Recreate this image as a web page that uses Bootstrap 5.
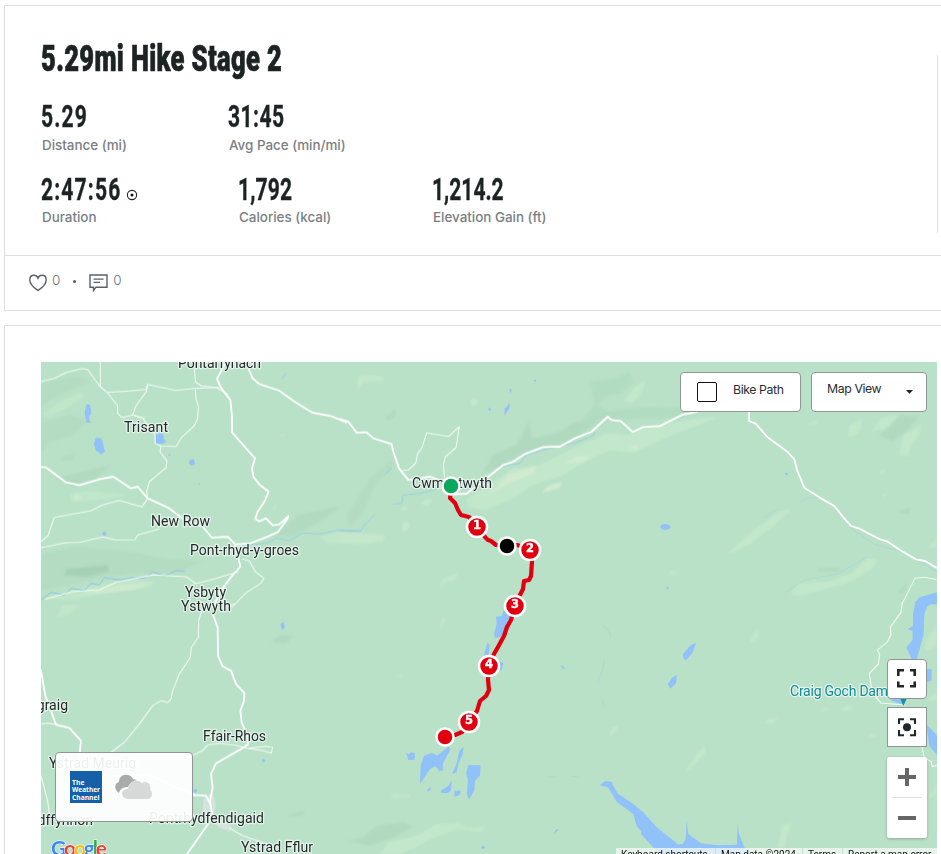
<!DOCTYPE html>
<html lang="en">
<head>
<meta charset="utf-8">
<meta name="viewport" content="width=device-width, initial-scale=1">
<title>5.29mi Hike Stage 2</title>
<link href="https://cdn.jsdelivr.net/npm/bootstrap@5.3.0/dist/css/bootstrap.min.css" rel="stylesheet">
<style>
  html, body { height: 854px; overflow: hidden; }
  body { background: #fff; color: #1d2323; font-family: Inter, "Liberation Sans", sans-serif; padding: 5px 0 0 4px; }
  .panel { border: 1px solid #dcdedf; border-right: 0; border-radius: 0; }
  .summary { height: 306px; margin-bottom: 14px; }
  .summary-main { height: 249px; padding: 36px 0 0 36px; }
  .side-rule { width: 1px; height: 178px; background: #dcdedf; margin: 13px 3px 0 0; }
  .cond { display: block; font-family: Roboto, "Liberation Sans", sans-serif; font-weight: 700; white-space: nowrap; transform-origin: 0 50%; width: max-content; }
  .page-title { font-size: 37px; line-height: 34px; font-weight: 900; transform: scaleX(.69); letter-spacing: .5px; height: 34px; margin: 0 0 24px; -webkit-text-stroke: .7px #1d2323; }
  .figure-num { font-size: 30.5px; line-height: 34px; height: 34px; transform: scaleX(.69); -webkit-text-stroke: .35px #1d2323; }
  .sp-wide { letter-spacing: 1.7px; } .sp-mid { letter-spacing: .7px; } .sp-low { letter-spacing: .2px; }
  .num-duration { margin-right: -32px; }
  .stat-cell { height: 73px; flex: none; }
  .stat-label { font-size: 13.4px; line-height: 16px; font-weight: 500; color: #7a7e84; margin: 3px 0 0 1px; white-space: nowrap; display: block; width: max-content; }
  .row-two .stat-label { margin-top: 2px; }
  .w-a { width: 187px; } .w-b { width: 197px; } .w-c { width: 194px; }
  .social { height: 55px; border-top: 1px solid #dcdedf; padding: 0 0 4px 24px; font-size: 13.5px; color: #6c7278; font-weight: 300; }
  .num-like, .num-note { position: relative; top: -1px; }
  .num-like { margin-left: 3px; } .num-note { margin-left: 5px; }
  .sep-dot { width: 3px; height: 3px; background: #555b60; margin: 0 13px; }
  .map-panel { height: 560px; padding: 36px 0 0 36px; }
  .map-box { width: 896px; height: 500px; position: relative; overflow: hidden; background: #b9e1c8; }
  .map-box > svg { display: block; }
  .ctl { position: absolute; background: #fff; border: 1px solid #8f9694; border-radius: 4px; font-size: 12.3px; color: #2a2e31; }
  .ctl-bike { left: 639px; top: 10px; width: 121px; height: 40px; padding: 0 0 4px 16px; letter-spacing: -.4px; }
  .tick { width: 20px; height: 20px; border: 1.5px solid #111; border-radius: 2px; margin: 3px 16px 0 0; }
  .ctl-view { left: 770px; top: 10px; width: 116px; height: 40px; padding: 0 13px 5px 15px; letter-spacing: -.4px; }
  .ctl-full { left: 846px; top: 297px; width: 40px; height: 40px; }
  .ctl-center { left: 846px; top: 345px; width: 40px; height: 40px; border-radius: 0; }
  .ctl-zoom { left: 846px; top: 395px; width: 40px; height: 81px; border: 0; border-radius: 2px; box-shadow: 0 1px 3px rgba(0,0,0,.25); }
  .weather { left: 14px; top: 390px; width: 138px; height: 70px; background: rgba(255,255,255,.92); padding: 0 0 0 14px; }
  .cloud { margin-left: 12px; }
  .legal { position: absolute; left: 575px; top: 486px; width: 321px; height: 14px; background: rgba(243,248,245,.78); font: 10px/14px Roboto, sans-serif; color: #111; }
  .legal span { padding-left: 5px; border-left: 1px solid #cfdcd4; white-space: nowrap; }
  .legal span:first-child { border: 0; width: 99px; }
  .legal span:nth-child(2) { width: 87px; } .legal span:nth-child(3) { width: 40px; }
</style>
</head>
<body>
<section class="panel summary">
  <div class="summary-main d-flex justify-content-between">
    <div>
      <h1 class="cond page-title">5.29mi Hike Stage 2</h1>
      <div class="d-flex">
        <div class="stat-cell w-a"><span class="cond figure-num sp-wide">5.29</span><span class="stat-label">Distance (mi)</span></div>
        <div class="stat-cell"><span class="cond figure-num sp-mid">31:45</span><span class="stat-label">Avg Pace (min/mi)</span></div>
      </div>
      <div class="d-flex row-two">
        <div class="stat-cell w-b">
          <div class="d-flex">
            <span class="cond figure-num sp-wide num-duration">2:47:56</span>
            <svg width="12" height="12" viewBox="0 0 12 12" class="mt-3"><circle cx="6" cy="6" r="4.600" fill="none" stroke="#222" stroke-width="1.100"/><circle cx="6" cy="6" r="1.500" fill="#111"/></svg>
          </div>
          <span class="stat-label">Duration</span>
        </div>
        <div class="stat-cell w-c"><span class="cond figure-num sp-low">1,792</span><span class="stat-label">Calories (kcal)</span></div>
        <div class="stat-cell"><span class="cond figure-num">1,214.2</span><span class="stat-label">Elevation Gain (ft)</span></div>
      </div>
    </div>
    <div class="side-rule"></div>
  </div>
  <div class="social d-flex align-items-center">
    <svg width="20" height="18" viewBox="0 0 20 18" class="mt-1"><path d="M9 16.500C6.500 14.700.8 11 .8 5.900C.8 2.600 3 1.300 5 1.300C7 1.300 8.300 2.500 9 4.200C9.700 2.500 11 1.300 13 1.300C15.300 1.300 17.200 2.800 17.200 5.900C17.200 11 11.500 14.700 9 16.500Z" fill="none" stroke="#5b6166" stroke-width="1.400"/></svg>
    <span class="num-like">0</span>
    <span class="rounded-circle sep-dot"></span>
    <svg width="19" height="18" viewBox="0 0 19 18" class="mt-1"><path d="M1 1H18V13.200H7L4.500 16.500V13.200H1Z" fill="none" stroke="#5b6166" stroke-width="1.400"/><path d="M4.500 5.200H14.500M4.500 8.400H11" stroke="#5b6166" stroke-width="1.200"/></svg>
    <span class="num-note">0</span>
  </div>
</section>

<section class="panel map-panel">
  <div class="map-box">
    <svg width="896" height="500" viewBox="41 362 896 500">
      <defs><filter id="soft"><feGaussianBlur stdDeviation="2.500"/></filter></defs>
      <rect x="41" y="362" width="896" height="500" fill="#b9e1c8"/>
      <!-- relief, north-west -->
      <g transform="translate(36 355) scale(.33333)" filter="url(#soft)">
        <g fill="#b1dac0">
          <path d="M15 85L120 62L160 78L80 115L15 150Z" opacity=".7"/><path d="M15 205L100 180L160 195L110 240L40 262L15 290Z" opacity=".7"/>
          <path d="M60 370L180 340L230 330L180 370L110 392Z"/><path d="M15 600L120 575L280 590L380 610L500 620L430 650L300 655L200 665L100 690L15 705Z" opacity=".75"/>
          <path d="M90 642L215 630L220 650L150 665L85 660Z" fill="#a6d0b6"/><path d="M715 540L790 480L900 455L905 465L840 505L770 545Z"/>
          <path d="M80 305L118 298L110 314L70 316Z"/>
        </g>
        <g fill="#c0e6ca">
          <path d="M20 175L90 130L140 110L145 125L100 155L30 190Z"/><path d="M100 415L150 408L270 418L260 425L170 438L105 440Z"/>
          <path d="M15 735L110 705L210 685L300 672L360 680L330 700L200 715L110 735Z"/><path d="M130 715L250 690L350 682L300 703L170 718Z" fill="#cdeacf"/><circle cx="124" cy="428" r="10" fill="#cdeacf"/>
          <path d="M850 545L900 530L930 535V560L880 568Z"/><path d="M705 465L722 445L716 470Z"/><path d="M720 242L740 236L755 246Z"/><path d="M65 788L90 755L140 748L95 780Z"/>
        </g>
      </g>
      <!-- relief, north -->
      <g transform="translate(340 355) scale(.33333)" filter="url(#soft)">
        <g fill="#b0d9bf">
          <path d="M430 350L460 300L530 270L570 195L575 250L650 235L700 205L760 195L720 240L660 268L600 275L520 310L450 350Z"/>
          <path d="M750 80L830 70L870 50L880 80L845 115L800 120L775 150L800 170L920 155L1045 160V185L920 190L840 195L800 185L740 225L640 265L720 200L765 150Z" opacity=".75"/>
          <path d="M90 370L160 310L155 345L110 380L70 470L30 520L20 480Z" opacity=".6"/><path d="M135 190L165 162L168 180L150 197Z"/>
        </g>
        <g fill="#c2e7cb">
          <path d="M380 430L450 390L520 340L600 330L720 270L800 235L860 240L930 215L1100 185L1130 190L1010 235L910 280L880 295L810 285L720 330L660 365L580 390L520 430L440 465L385 460Z"/>
          <path d="M470 400L500 360L590 332L580 355L510 385L440 420Z" fill="#d0ebd0"/><path d="M605 415L625 393L665 380L660 398Z" fill="#d0ebd0"/><path d="M675 325L705 305L750 302L735 320Z" fill="#d0ebd0"/><path d="M865 280L892 270L895 288Z" fill="#d0ebd0"/>
          <path d="M850 140L885 95L915 75L910 105L880 145Z"/><path d="M50 115L55 65L100 60L137 70L125 78L70 80Z"/><path d="M0 530L60 535L135 540L130 560L60 568L0 565Z"/>
          <path d="M300 705L305 672L355 655L345 675L315 680Z"/><path d="M185 530L190 498L208 505L204 525Z"/><circle cx="402" cy="140" r="11"/><path d="M240 445L265 430L280 440L260 454Z"/><path d="M180 465L190 452L205 458L195 468Z"/>
        </g>
      </g>
      <!-- relief, north-east -->
      <g transform="translate(641 355) scale(.33333)" filter="url(#soft)">
        <path d="M715 240L780 180L835 185L790 235L750 260Z" fill="#b0d9bf"/><path d="M768 468L810 458L805 475L780 475ZM530 640L600 638L590 650L535 650ZM770 710L800 683L785 715Z" fill="#b0d9bf"/>
        <g fill="#c2e7cb"><path d="M620 245L625 215L660 190L660 225L640 245Z"/><path d="M690 230L720 190L770 180L740 220Z"/><path d="M775 300L785 240L840 210L835 240L810 275L800 305Z"/><path d="M495 213L525 194L530 205Z"/><path d="M260 595L320 540L400 480L440 460L447 468L400 510L330 565L285 590Z"/><path d="M450 720L470 685L560 680L630 655L680 610L710 612L695 640L630 680L560 700L490 720Z"/><path d="M80 660L95 645L120 652Z"/><path d="M860 580L890 545V575Z"/><path d="M710 360L725 343L732 350ZM718 424L738 412L735 424Z"/></g>
      </g>
      <!-- relief, south -->
      <g transform="translate(340 604) scale(.33333)" filter="url(#soft)">
        <path d="M20 712L70 700L110 665L190 655L220 668L160 700L90 725Z" fill="#b0d9bf"/>
        <g fill="#c2e7cb"><path d="M120 750L145 715L230 695L290 660L355 658L380 670L440 668L420 685L350 675L270 705L220 735L180 750Z"/><path d="M150 570L215 572L210 580L160 582Z"/><path d="M300 75L305 38L314 45L305 76Z"/><path d="M803 400L820 370L838 365L820 390Z"/><path d="M170 220L185 210L192 218Z"/></g>
      </g>
      <g transform="translate(641 604) scale(.33333)" filter="url(#soft)">
        <g fill="#c2e7cb"><path d="M325 115L350 70L353 95L340 115Z"/><path d="M370 360L385 343L412 342L395 358Z"/><path d="M533 325L550 310L565 318ZM597 316L620 302L640 310L620 322Z"/><path d="M128 508L160 460L190 425L194 445L165 480Z"/><path d="M410 730L425 665L453 655L440 690L430 735Z"/><path d="M850 135L865 95L889 60V125L860 140Z"/><path d="M855 290L889 265V290ZM860 585L889 540V570Z"/><path d="M673 405L700 385L710 395Z"/></g>
      </g>
      <g transform="translate(36 604) scale(.33333)" filter="url(#soft)"><path d="M705 115L730 95L775 93L750 118ZM745 638L800 620L808 632Z" fill="#b0d9bf"/><path d="M60 40L80 5L120 0L90 30Z" fill="#c0e6ca"/></g>

      <!-- water and roads, north-west -->
      <g transform="translate(36 355) scale(.33333)" fill="none" stroke-linejoin="round" stroke-linecap="round">
        <g fill="#90c1f9"><path d="M150 152Q156 143 163 153L166 175L158 185L164 203L152 203L146 175Z"/><path d="M178 252Q187 244 198 253L207 290L196 298L180 286L174 268Z"/><path d="M360 238L380 234L385 254L392 260L378 267L360 266Z"/><path d="M460 317L473 312L477 328L466 332L459 326Z"/><circle cx="205" cy="536" r="6"/><circle cx="400" cy="300" r="3"/><circle cx="489" cy="386" r="2.500"/></g>
        <path d="M15 735L45 712L85 720L105 700L145 706L165 685L190 690L205 668L255 675L285 668L325 670L350 650L385 663L420 647L445 648" stroke="#8cc3e8" stroke-width="3"/>
        <path d="M615 572L690 565L720 550L760 557L800 534L850 537L905 526L970 526" stroke="#98cbe2" stroke-width="2.500"/><path d="M738 72L750 55" stroke="#8fc3e2" stroke-width="2"/>
        <g stroke="#f0faf2" stroke-width="3.200">
          <path d="M15 80L55 70L90 52L140 40L155 44L190 92L215 114L245 152V175L258 188L290 180L325 190"/><path d="M193 20V92M215 112L280 108L330 103L335 88L420 106L475 100L550 97"/>
          <path d="M335 88L332 108L300 152L290 180L320 190L345 222L357 240V265L375 273L420 274L438 246L475 212L485 190L487 153L480 130L478 103"/>
          <path d="M475 40L478 80L495 92L540 97L575 118"/><path d="M375 273L372 290L393 318L390 338L340 380L332 410L335 430L318 456L250 436L200 450L165 467L55 487L36 542L15 560"/>
          <path d="M15 578L90 563L130 562L200 546L240 555L297 554L305 540L370 522"/><path d="M30 732L110 710L190 704L240 682L350 660L450 665L480 686L535 672L580 658L608 650"/>
          <path d="M620 612L640 618L658 650L684 670L675 684L628 715L590 755"/>
        </g>
        <g stroke="#fff" stroke-width="5.500">
          <path d="M15 336L30 337L90 382L130 391L190 373L232 365L285 400L305 395L335 430L400 460L440 490L500 515L528 548L575 545L595 565L603 590L613 635L590 660L560 700L530 755"/>
          <path d="M570 20L543 72L555 98L583 135L588 185V232L630 280L657 310L648 340L652 365L670 388L698 410L685 440L665 470L658 492L670 499L690 490L710 511L730 508L757 483L755 490L725 532L690 547L640 566L600 568"/>
          <path d="M635 35L650 70L670 87L730 107L780 143L830 173L885 183L912 194L930 202"/>
        </g>
      </g>
      <!-- south-west -->
      <g transform="translate(36 604) scale(.33333)" fill="none" stroke-linejoin="round" stroke-linecap="round">
        <path d="M502 585L530 565L540 600L535 630L590 670L580 683L550 670L520 650L500 620Z" fill="#d4e3dc"/>
        <g fill="#90c1f9"><path d="M733 60L742 53L747 70L738 78Z"/><circle cx="683" cy="470" r="5"/><circle cx="478" cy="560" r="5"/></g>
        <g stroke="#f0faf2" stroke-width="3.200"><path d="M595 0L575 10M500 10L488 50L487 100L466 130L463 160L430 210L410 260L405 285L395 296L375 290L350 305L310 360L265 415L225 445"/><path d="M15 360L35 357L60 362M15 515L35 590L40 630"/><path d="M470 455L500 440L515 423L550 418L600 424L635 433L690 427L710 430L706 447L680 440L630 432"/><path d="M580 672L620 695L680 716"/></g>
        <g stroke="#fff" stroke-width="5.500"><path d="M530 30L545 70L546 155L560 187L585 200L600 240L625 267L624 290L613 320L617 355L637 400L635 422L610 438L540 478L525 510L530 550L522 590L530 640L450 755"/><path d="M15 200L28 275L45 320L60 362L100 372L135 410L130 455"/><path d="M470 573L510 575L523 600M190 515L340 512L420 550L480 574"/></g>
      </g>
      <!-- north -->
      <g transform="translate(340 355) scale(.33333)" fill="none" stroke-linejoin="round" stroke-linecap="round">
        <g fill="#90c1f9"><path d="M494 160L510 145L508 160L493 181ZM508 102L515 103L512 115ZM582 74H588V80H582Z"/><circle cx="449" cy="163" r="4"/></g>
        <g stroke="#98cbe2" stroke-width="2.500"><path d="M0 527L60 530L75 508L105 478M160 447L185 445L190 420L240 415L290 402M135 357L155 340M480 335L540 325L560 300L620 282L700 265L760 242L765 230"/></g>
        <g stroke="#f0faf2" stroke-width="3.200"><path d="M182 347L205 345L228 323L232 298L247 275L260 234L326 244L358 215L348 278L316 305L310 330L313 365"/></g>
        <g stroke="#fff" stroke-width="5.500"><path d="M0 193L25 200L50 233L80 232L100 250L155 267L160 290L177 340L205 375L270 365L300 376L340 418L380 416L445 365L490 330L520 320L555 297L610 276L660 275L705 250L755 230L803 185L815 195L842 198L878 231L910 216L960 213L1025 180L1070 170"/></g>
      </g>
      <!-- north-east -->
      <g transform="translate(641 355) scale(.33333)" fill="none" stroke-linejoin="round" stroke-linecap="round">
        <ellipse cx="73" cy="516" rx="15" ry="9" fill="#90c1f9"/><circle cx="436" cy="357" r="4" fill="#90c1f9"/><circle cx="80" cy="699" r="3.500" fill="#90c1f9"/>
        <path d="M435 712L490 675L590 657L680 605M630 520L700 568L780 590L889 650M480 440L500 428L535 430M370 488L410 462" stroke="#a5d4d6" stroke-width="1.800"/>
        <path d="M784 745L822 670L850 667L889 674" stroke="#f0faf2" stroke-width="3"/>
        <path d="M324 160V198L344 206L380 247L440 291L460 313L468 345L490 398L535 427L580 453L605 485L630 513L655 521L715 552L740 560L785 590L825 613L852 618L889 640" stroke="#fff" stroke-width="5.500"/>
        <path d="M820 750L840 737L889 725V748Z" fill="#90c1f9"/>
      </g>
      <!-- south -->
      <g transform="translate(340 604) scale(.33333)" fill="#90c1f9">
        <path d="M490 20L525 20L500 60L490 95L465 103L462 90L470 60L468 38L485 36Z"/><path d="M430 160L442 117L449 123L445 160ZM478 170L490 178L485 198L475 200Z"/>
        <path d="M198 447L208 451L213 445L225 448L223 467L205 468ZM240 540L242 485L252 455L275 446L290 455L325 428L332 435L308 480L309 498L298 502L287 486L270 495Z"/>
        <path d="M350 478L358 440L371 429L368 450L355 480L350 505L336 511Z"/><path d="M385 483L422 484L420 515L405 530L403 558L388 586L381 575L384 525L378 510Z"/><path d="M302 560L325 545L335 528L333 560L320 568L304 566ZM343 560L362 560L360 573L344 578ZM262 556L272 549L271 558L264 563Z"/>
        <path d="M780 543L795 532L815 533L823 552L835 570L880 600L910 625L950 670L1020 725L1060 730L1035 750H965L930 710L890 667L880 630L830 593L805 551Z"/>
        <path d="M640 690L650 675L655 678ZM660 184L673 188L672 197Z"/><circle cx="429" cy="730" r="5"/>
      </g>
      <path d="M548 777L556 777M570 776L579 777M602 625Q610 630 611 637M604 659Q604 671 597 682M602 700L605 708" fill="none" stroke="#a9d6d2" stroke-width=".7"/>
      <!-- south-east -->
      <g transform="translate(641 604) scale(.33333)" stroke-linejoin="round" stroke-linecap="round">
        <g fill="#90c1f9"><path d="M126 150L150 122L165 118L155 145L136 168L128 165ZM80 240L95 220L108 213L105 238L88 254Z"/><path d="M822 0H862L850 30L848 90L828 165H812L796 130L815 108V82L800 75L816 66V30Z"/><path d="M820 -2L835 -20L889 -35V-18L862 5Z"/><path d="M856 195L872 196V230L856 235ZM855 360L889 395V455L865 425ZM740 280H795L790 303L755 292Z"/>
        <path d="M0 620L30 665L60 705L90 725L125 720L134 705L137 650L142 690L180 718L230 724L288 722L290 658L294 690L310 730L330 755H60L0 690Z"/></g>
        <g fill="none" stroke="#f0faf2" stroke-width="3.500"><path d="M784 -5L780 25L748 70L750 92L738 115L708 139L716 150L712 180L685 208L690 245L705 280L720 297L790 303M842 425L850 462L870 472L874 488L889 484"/></g>
        <path d="M778 284H797L787 306Z" fill="#14969d"/>
      </g>

      <!-- place names -->
      <g font-family="Roboto, sans-serif" font-size="14" fill="#23282b" stroke="#e4f4ea" stroke-width="2.500" stroke-linejoin="round" paint-order="stroke" lengthAdjust="spacingAndGlyphs">
        <text x="178" y="368" textLength="83">Pontarfynach</text><text x="124" y="432" textLength="44">Trisant</text><text x="151" y="526" textLength="59">New Row</text><text x="190" y="555" textLength="109">Pont-rhyd-y-groes</text>
        <text x="185" y="597" textLength="41">Ysbyty</text><text x="181" y="611" textLength="50">Ystwyth</text><text x="412" y="488" textLength="80">Cwmystwyth</text><text x="68" y="710" text-anchor="end">graig</text>
        <text x="203" y="741" textLength="63">Ffair-Rhos</text><text x="49" y="768" textLength="87">Ystrad Meurig</text><text x="93" y="825" text-anchor="end">dffynnon</text><text x="149" y="823" textLength="115">Pontrhydfendigaid</text><text x="241" y="852" textLength="72">Ystrad Fflur</text>
        <text x="790" y="696" textLength="98" fill="#148c98">Craig Goch Dam</text>
      </g>
      <text x="51" y="856" font-family="Lato, sans-serif" font-size="21" font-weight="700" stroke="#fff" stroke-width="1" paint-order="stroke" textLength="56"><tspan fill="#4285f4">G</tspan><tspan fill="#ea4335">o</tspan><tspan fill="#fbbc05">o</tspan><tspan fill="#4285f4">g</tspan><tspan fill="#34a853">l</tspan><tspan fill="#ea4335">e</tspan></text>

      <!-- hike track -->
      <path d="M451 490L450 498L455 503L458 510L461 515L469 517L477 526L485 537L488 540L491 541L496 545L506 546L517 545L530 549L532 562L531 576L529 580L524 581L523 589L520 595L515 605L511 620L507 627L504 636L498 647L494 654L489 665L488 680L489 690L486 696L480 701L477 711L469 721L462 732L455 735L445 737" fill="none" stroke="#e1000f" stroke-width="4.200" stroke-linejoin="round"/>
      <g stroke="#fff" stroke-width="2.500"><circle cx="451" cy="486" r="8.500" fill="#0ba75a"/><circle cx="507" cy="546" r="8.500" fill="#000"/><g fill="#e1000f"><circle cx="445" cy="737" r="8.500"/><circle cx="477" cy="527" r="10"/><circle cx="530" cy="550" r="10"/><circle cx="515" cy="606" r="10"/><circle cx="489" cy="666" r="10"/><circle cx="469" cy="722" r="10"/></g></g>
      <g font-family="DejaVu Sans, sans-serif" font-weight="700" font-size="11.500" fill="#fff" stroke="#fff" stroke-width=".4" text-anchor="middle"><text x="477" y="529">1</text><text x="530" y="552">2</text><text x="515" y="608">3</text><text x="489" y="668">4</text><text x="469" y="724">5</text></g>
    </svg>

    <label class="ctl ctl-bike d-flex align-items-center"><span class="tick"></span>Bike Path</label>
    <div class="ctl ctl-view d-flex align-items-center justify-content-between"><span>Map View</span><svg width="7" height="4" viewBox="0 0 7 4" class="mt-1"><path d="M0 0H7L3.500 3.800Z" fill="#222"/></svg></div>
    <div class="ctl ctl-full"><svg class="d-block" width="38" height="38" viewBox="0 0 38 38"><path d="M10.300 16V10.300H16M22 10.300H26.700V16M26.700 21.500V26.200H22M16 26.200H10.300V21.500" fill="none" stroke="#222729" stroke-width="2.600"/></svg></div>
    <div class="ctl ctl-center"><svg class="d-block" width="38" height="38" viewBox="0 0 38 38"><path d="M11 16V11.200H16M22 11.200H27V16M27 22V27.200H22M16 27.200H11V22" fill="none" stroke="#222729" stroke-width="2.100"/><circle cx="19" cy="19.200" r="4" fill="#222729"/></svg></div>
    <div class="ctl ctl-zoom"><svg class="d-block" width="40" height="81" viewBox="0 0 40 81"><path d="M11 20H29M20 11V29M11 61H29" stroke="#666" stroke-width="4"/><path d="M5 40.500H35" stroke="#e2e2e2"/></svg></div>
    <div class="ctl weather d-flex align-items-center">
      <svg width="32" height="32" viewBox="0 0 32 32"><rect width="32" height="32" fill="#1560a8"/><g fill="#fff" font-family="Open Sans, sans-serif" font-size="7.800" font-weight="700"><text x="2" y="13.800" textLength="12.500" lengthAdjust="spacingAndGlyphs">The</text><text x="2" y="21.200" textLength="28" lengthAdjust="spacingAndGlyphs">Weather</text><text x="2" y="28.600" textLength="27.500" lengthAdjust="spacingAndGlyphs">Channel</text></g></svg>
      <svg class="cloud" width="40" height="28" viewBox="0 0 40 28"><path d="M5 20C0 17 0 10 5 9C5 4 9 1 13 2C16 2 18 4 19 6L23 7C17 8 15 12 14 14C9 14 6 16 5 20Z" fill="#aaa"/><path d="M15 26C6 26 6 16 14 16C15 9 22 5 28 10C33 7 38 12 36 17C40 20 38 26 33 26Z" fill="#d7d8d8"/></svg>
    </div>
    <div class="legal d-flex"><span>Keyboard shortcuts</span><span>Map data ©2024</span><span>Terms</span><span>Report a map error</span></div>
  </div>
</section>
<script src="https://cdn.jsdelivr.net/npm/bootstrap@5.3.0/dist/js/bootstrap.bundle.min.js"></script>
</body>
</html>
